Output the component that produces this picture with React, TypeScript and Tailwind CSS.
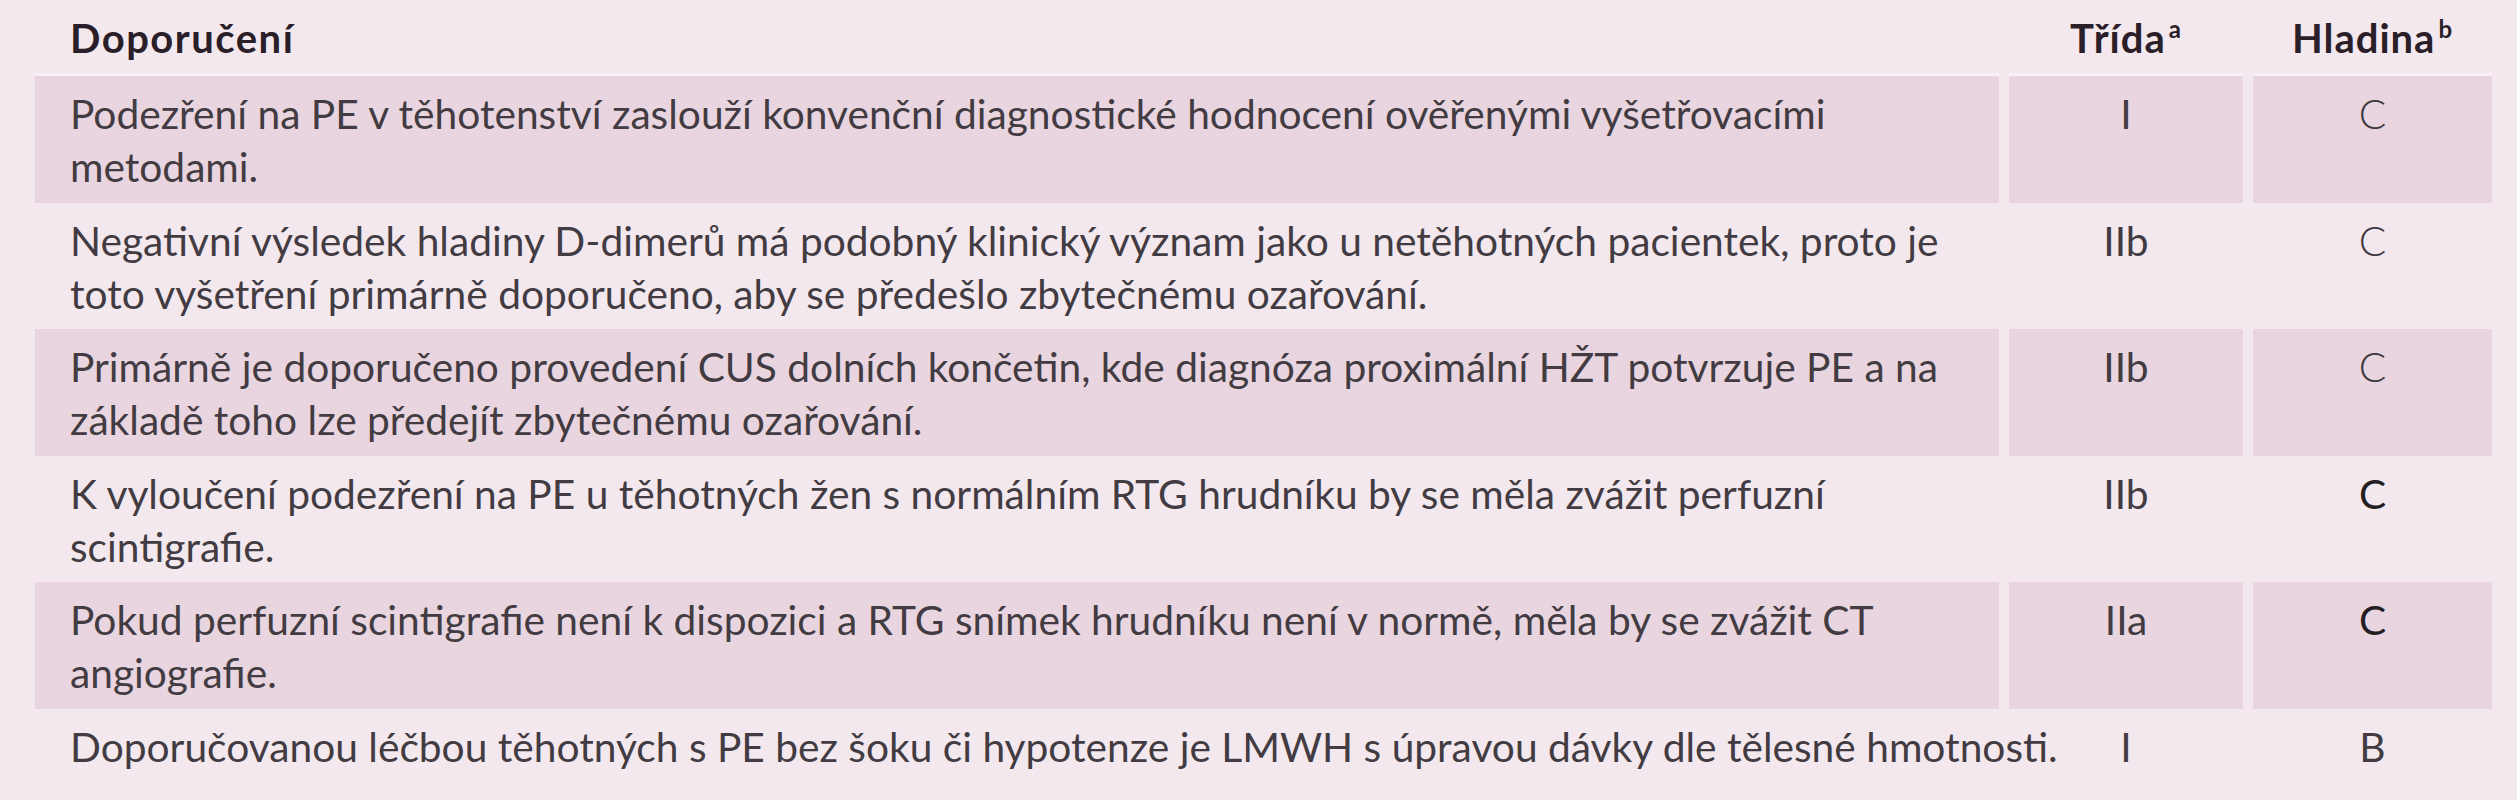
import React from "react";

type Row = { lines: string[]; cls: string; lvl: string; lvlStrong?: boolean };

const rows: Row[] = [
  {
    lines: [
      "Podezření na PE v těhotenství zaslouží konvenční diagnostické hodnocení ověřenými vyšetřovacími",
      "metodami.",
    ],
    cls: "I",
    lvl: "C",
  },
  {
    lines: [
      "Negativní výsledek hladiny D-dimerů má podobný klinický význam jako u netěhotných pacientek, proto je",
      "toto vyšetření primárně doporučeno, aby se předešlo zbytečnému ozařování.",
    ],
    cls: "IIb",
    lvl: "C",
  },
  {
    lines: [
      "Primárně je doporučeno provedení CUS dolních končetin, kde diagnóza proximální HŽT potvrzuje PE a na",
      "základě toho lze předejít zbytečnému ozařování.",
    ],
    cls: "IIb",
    lvl: "C",
  },
  {
    lines: [
      "K vyloučení podezření na PE u těhotných žen s normálním RTG hrudníku by se měla zvážit perfuzní",
      "scintigrafie.",
    ],
    cls: "IIb",
    lvl: "C",
    lvlStrong: true,
  },
  {
    lines: [
      "Pokud perfuzní scintigrafie není k dispozici a RTG snímek hrudníku není v normě, měla by se zvážit CT",
      "angiografie.",
    ],
    cls: "IIa",
    lvl: "C",
    lvlStrong: true,
  },
  {
    lines: [
      "Doporučovanou léčbou těhotných s PE bez šoku či hypotenze je LMWH s úpravou dávky dle tělesné hmotnosti.",
    ],
    cls: "I",
    lvl: "B",
  },
];

export default function App() {
  return (
    <div
      className="min-h-[800px] w-[2517px] bg-[#f4e8ef] pl-[35px] pr-[25px] text-[40.7px] leading-[53px] text-[#423c42]"
      style={{ fontFamily: "Lato, 'Noto Sans', sans-serif" }}
    >
      <div className="grid grid-cols-[1964px_234px_239px] gap-x-[10px]">
        {/* header */}
        <div className="h-[76px] border-b-[3px] border-[#f8f0f4] pl-[35px] pt-[12px] text-[40px] font-bold tracking-[1.5px] text-[#2a1e28]">
          Doporučení
        </div>
        <div className="h-[76px] border-b-[3px] border-[#f8f0f4] pt-[12px] text-center text-[40px] font-bold tracking-[1px] text-[#2a1e28]">
          Třída<sup className="relative -top-[15px] ml-[3px] text-[24px] font-bold">a</sup>
        </div>
        <div className="h-[76px] border-b-[3px] border-[#f8f0f4] pt-[12px] text-center text-[40px] font-bold tracking-[1px] text-[#2a1e28]">
          Hladina<sup className="relative -top-[15px] ml-[3px] text-[24px] font-bold">b</sup>
        </div>

        {rows.map((r, i) => {
          const shaded = i % 2 === 0;
          const bg = shaded ? "bg-[#e9d5df]" : "bg-transparent";
          return (
            <React.Fragment key={i}>
              <div className={`h-[126.5px] whitespace-nowrap pl-[35px] pt-[11px] ${bg}`}>
                {r.lines.map((l, j) => (
                  <div key={j}>{l}</div>
                ))}
              </div>
              <div className={`h-[126.5px] pt-[11px] text-center ${bg}`}>{r.cls}</div>
              <div
                className={`h-[126.5px] pt-[11px] text-center ${bg} ${
                  r.lvlStrong
                    ? "font-normal text-[#241e23]"
                    : r.lvl === "C"
                    ? "font-light text-[#3e383e]"
                    : "text-[#423c42]"
                }`}
              >
                {r.lvl}
              </div>
            </React.Fragment>
          );
        })}
      </div>
    </div>
  );
}
